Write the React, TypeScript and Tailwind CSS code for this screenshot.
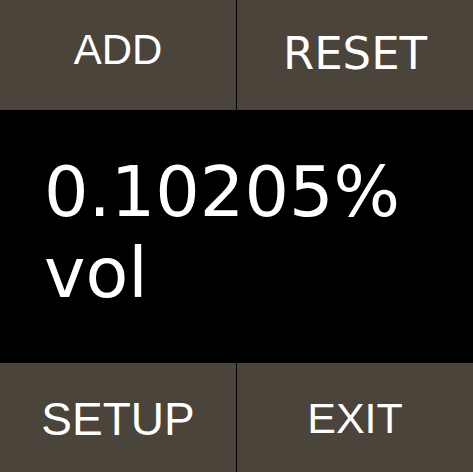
const buttonBase =
  'flex items-center justify-center bg-[#4b443a] text-white leading-none';

export default function App() {
  return (
    <div className="w-[473px] h-[472px] flex flex-col bg-black overflow-hidden">
      {/* Top buttons */}
      <div className="flex h-[110px]">
        <button
          className={`${buttonBase} w-[237px] border-r border-black pb-[10px] text-[42px] font-['Liberation_Sans',Arial,sans-serif]`}
        >
          ADD
        </button>
        <button
          className={`${buttonBase} flex-1 pb-[3px] text-[45px] font-['DejaVu_Sans',Verdana,sans-serif]`}
        >
          RESET
        </button>
      </div>

      {/* Reading */}
      <div className="h-[253px] pt-[42px] pl-[44px] text-white text-[70px] leading-[81px] font-['DejaVu_Sans',Verdana,sans-serif]">
        <div>0.10205%</div>
        <div>vol</div>
      </div>

      {/* Bottom buttons */}
      <div className="flex flex-1">
        <button
          className={`${buttonBase} w-[237px] border-r border-black pt-[2px] text-[46px] font-['Liberation_Sans',Arial,sans-serif]`}
        >
          SETUP
        </button>
        <button
          className={`${buttonBase} flex-1 pt-[2px] text-[43px] font-['Liberation_Sans',Arial,sans-serif]`}
        >
          EXIT
        </button>
      </div>
    </div>
  );
}
